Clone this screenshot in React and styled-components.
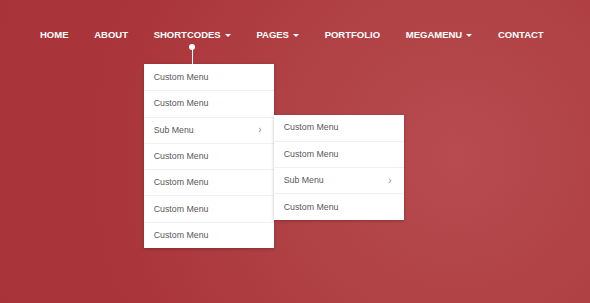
import styled, { createGlobalStyle } from "styled-components";

const GlobalStyle = createGlobalStyle`
    html, body {
        margin: 0;
        padding: 0;
    }
    body {
        width: 590px;
        height: 303px;
        overflow: hidden;
        font-family: "Liberation Sans", Arial, sans-serif;
        background: radial-gradient(circle at 456px 156px, #b74b4f 0%, #b14347 30%, #aa363b 70%, #a83338 100%);
    }
`

const Page = styled.div`
    width: 590px;
    height: 303px;
`

const NavBar = styled.ul`
    list-style: none;
    margin: 0;
    padding: 27px 0 0 40px;
    display: flex;
    flex-direction: row;
    gap: 25.7px;
`

const NavItem = styled.li`
    position: relative;
    display: flex;
    align-items: center;
    gap: 4px;
    height: 15px;
    color: #ffffff;
    font-size: 9.5px;
    font-weight: 700;
    line-height: 15px;
    white-space: nowrap;
`

const Caret = styled.span`
    width: 0;
    height: 0;
    border-left: 3px solid transparent;
    border-right: 3px solid transparent;
    border-top: 3px solid #ffffff;
    margin-top: 1px;
`

const Connector = styled.span`
    position: absolute;
    left: 50%;
    top: 17px;
    width: 1px;
    height: 20px;
    margin-left: -0.5px;
    background: #ffffff;

    &::before {
        content: "";
        position: absolute;
        left: -2.5px;
        top: 0;
        width: 6px;
        height: 6px;
        border-radius: 50%;
        background: #ffffff;
    }
`

const Dropdown = styled.ul`
    position: absolute;
    left: ${(p) => p.$left};
    top: ${(p) => p.$top};
    list-style: none;
    margin: 0;
    padding: 0;
    width: 130px;
    background: #ffffff;
    box-shadow: 0 1px 3px rgba(0, 0, 0, 0.25);
    z-index: ${(p) => p.$z || 1};
`

const MenuRow = styled.li`
    position: relative;
    box-sizing: border-box;
    height: 26.3px;
    padding: 0 10px;
    display: flex;
    align-items: center;
    justify-content: space-between;
    color: #585858;
    font-size: 8.8px;
    font-weight: 400;
    border-top: 1px solid #f0f0f0;

    &:first-child {
        border-top: 0;
    }
`

const Chevron = styled.span`
    color: #8a8a8a;
    font-size: 10px;
    line-height: 1;
    margin-right: 2px;
`

function SubMenu() {
    return (
        <Dropdown $left="130px" $top="-3px" $z={2}>
            <MenuRow>Custom Menu</MenuRow>
            <MenuRow>Custom Menu</MenuRow>
            <MenuRow>
                Sub Menu
                <Chevron>›</Chevron>
            </MenuRow>
            <MenuRow>Custom Menu</MenuRow>
        </Dropdown>
    );
}

function App() {
    return (
        <Page>
            <GlobalStyle />
            <NavBar>
                <NavItem>HOME</NavItem>
                <NavItem>ABOUT</NavItem>
                <NavItem>
                    SHORTCODES <Caret />
                    <Connector />
                    <Dropdown $left="-10px" $top="37px">
                        <MenuRow>Custom Menu</MenuRow>
                        <MenuRow>Custom Menu</MenuRow>
                        <MenuRow>
                            Sub Menu
                            <Chevron>›</Chevron>
                            <SubMenu />
                        </MenuRow>
                        <MenuRow>Custom Menu</MenuRow>
                        <MenuRow>Custom Menu</MenuRow>
                        <MenuRow>Custom Menu</MenuRow>
                        <MenuRow>Custom Menu</MenuRow>
                    </Dropdown>
                </NavItem>
                <NavItem>
                    PAGES <Caret />
                </NavItem>
                <NavItem>PORTFOLIO</NavItem>
                <NavItem>
                    MEGAMENU <Caret />
                </NavItem>
                <NavItem>CONTACT</NavItem>
            </NavBar>
        </Page>
    );
}

export default App;
